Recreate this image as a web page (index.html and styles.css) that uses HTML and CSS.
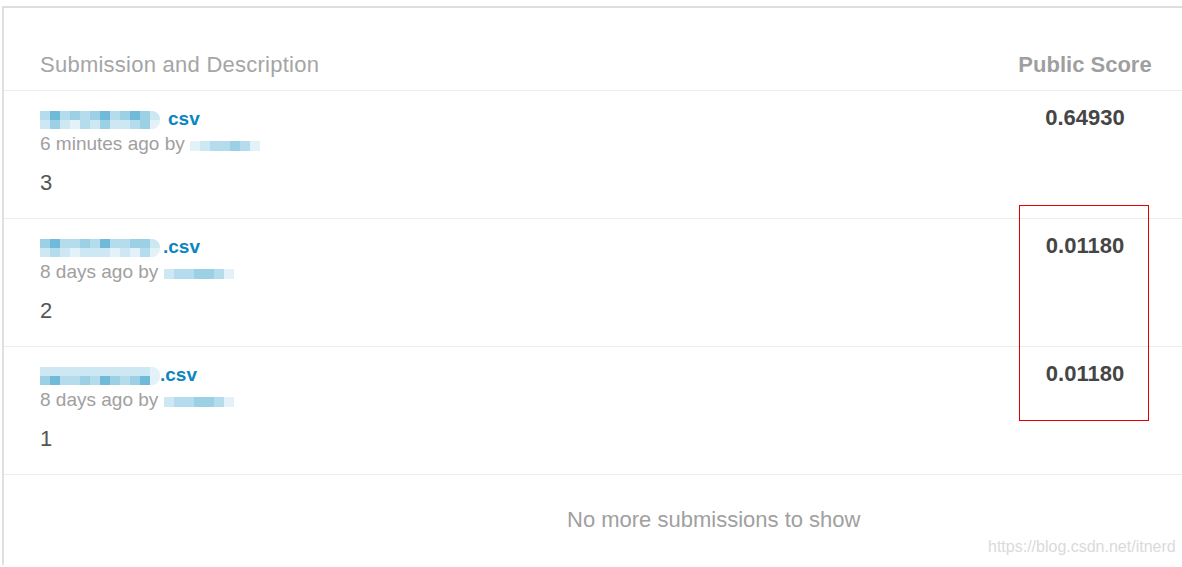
FILE: index.html
```html
<!DOCTYPE html>
<html>
<head>
<meta charset="utf-8">
<link rel="stylesheet" href="styles.css">
</head>
<body>
<div class="panel">
  <div class="head">
    <div class="col-main">Submission and Description</div>
    <div class="col-score">Public Score</div>
  </div>

  <div class="row">
    <div class="col-main">
      <div class="file"><span class="mosaic cover"><i class="m3"></i><i class="m1"></i><i class="m3"></i><i class="m2"></i><i class="m3"></i><i class="m2"></i><i class="m1"></i><i class="m3"></i><i class="m2"></i><i class="m1"></i><i class="m2"></i><i class="m4"></i><i class="m4"></i><i class="m2"></i><i class="m4"></i><i class="m5"></i><i class="m3"></i><i class="m4"></i><i class="m2"></i><i class="m4"></i><i class="m4"></i><i class="m3"></i><i class="m2"></i><i class="m5"></i></span>csv</div>
      <div class="meta">6 minutes ago by <span class="user"><i class="m5"></i><i class="m4"></i><i class="m3"></i><i class="m3"></i><i class="m2"></i><i class="m3"></i><i class="m5"></i></span></div>
      <div class="desc">3</div>
    </div>
    <div class="col-score score">0.64930</div>
  </div>

  <div class="row">
    <div class="col-main">
      <div class="file"><span class="mosaic gap"><i class="m2"></i><i class="m1"></i><i class="m3"></i><i class="m3"></i><i class="m2"></i><i class="m3"></i><i class="m1"></i><i class="m3"></i><i class="m3"></i><i class="m2"></i><i class="m2"></i><i class="m4"></i><i class="m4"></i><i class="m3"></i><i class="m4"></i><i class="m5"></i><i class="m4"></i><i class="m4"></i><i class="m4"></i><i class="m5"></i><i class="m4"></i><i class="m5"></i><i class="m3"></i><i class="m5"></i></span>.csv</div>
      <div class="meta">8 days ago by <span class="user"><i class="m4"></i><i class="m3"></i><i class="m3"></i><i class="m2"></i><i class="m2"></i><i class="m3"></i><i class="m5"></i></span></div>
      <div class="desc">2</div>
    </div>
    <div class="col-score score">0.01180</div>
  </div>

  <div class="row">
    <div class="col-main">
      <div class="file"><span class="mosaic"><i class="m4"></i><i class="m4"></i><i class="m4"></i><i class="m4"></i><i class="m4"></i><i class="m4"></i><i class="m4"></i><i class="m4"></i><i class="m4"></i><i class="m4"></i><i class="m4"></i><i class="m5"></i><i class="m2"></i><i class="m1"></i><i class="m3"></i><i class="m3"></i><i class="m2"></i><i class="m3"></i><i class="m1"></i><i class="m2"></i><i class="m3"></i><i class="m2"></i><i class="m1"></i><i class="m5"></i></span>.csv</div>
      <div class="meta">8 days ago by <span class="user"><i class="m4"></i><i class="m3"></i><i class="m3"></i><i class="m2"></i><i class="m2"></i><i class="m3"></i><i class="m5"></i></span></div>
      <div class="desc">1</div>
    </div>
    <div class="col-score score">0.01180</div>
  </div>

  <div class="foot">No more submissions to show</div>

  <div class="mark"></div>
</div>
<div class="watermark">https://blog.csdn.net/itnerd</div>
</body>
</html>
```

FILE: styles.css
```css
html, body {
  margin: 0;
  padding: 0;
  background: #fff;
  font-family: "Liberation Sans", Arial, sans-serif;
}

.panel {
  position: relative;
  margin: 6px 0 0 2px;
  border-left: 2px solid #dee1e4;
  border-top: 2px solid #dedede;
  height: 559px;
  box-sizing: border-box;
}

.head {
  display: flex;
  align-items: flex-end;
  padding: 45px 27px 13px 36px;
  border-bottom: 1px solid #ececec;
  font-size: 22px;
  line-height: 24px;
  color: #a5a5a5;
  white-space: nowrap;
}

.head .col-main {
  letter-spacing: 0.25px;
}

.col-main {
  flex: 1;
}

.col-score {
  width: 140px;
  flex: none;
  text-align: center;
  white-space: nowrap;
}

.head .col-score {
  font-weight: bold;
  color: #9f9f9f;
}

.row {
  display: flex;
  padding: 16px 27px 0 36px;
  box-sizing: border-box;
  height: 128px;
  border-bottom: 1px solid #ececec;
}

.file {
  font-size: 19px;
  line-height: 24px;
  font-weight: bold;
  color: #0c86c0;
  display: flex;
  align-items: center;
}

.mosaic {
  display: inline-grid;
  grid-template-columns: repeat(12, 10px);
  grid-auto-rows: 9px;
  width: 120px;
  margin-top: 1px;
  border-radius: 0 8px 8px 0;
  overflow: hidden;
}

.mosaic.cover {
  margin-right: 8px;
}

.mosaic.gap {
  margin-right: 3px;
}

.mosaic i, .user i {
  display: block;
}

.user {
  display: inline-grid;
  grid-template-columns: repeat(7, 10px);
  grid-auto-rows: 10px;
  vertical-align: -1px;
}

.m1 { background: #6fbad9; }
.m2 { background: #9bd0e5; }
.m3 { background: #b4dcec; }
.m4 { background: #cde8f2; }
.m5 { background: #e3f2f8; }

.meta {
  margin-top: 1px;
  font-size: 19px;
  line-height: 24px;
  color: #a0a0a0;
}

.desc {
  margin-top: 14px;
  font-size: 22px;
  line-height: 26px;
  color: #555;
}

.score {
  margin-top: -1px;
  font-size: 22px;
  line-height: 24px;
  font-weight: bold;
  color: #454545;
}

.foot {
  padding: 33px 0 0 563px;
  font-size: 22px;
  line-height: 24px;
  color: #a0a0a0;
}

.mark {
  position: absolute;
  left: 1015px;
  top: 197px;
  width: 128px;
  height: 214px;
  border: 1px solid #e60000;
}

.watermark {
  position: absolute;
  left: 988px;
  top: 537px;
  font-size: 16px;
  line-height: 20px;
  color: #dadada;
}
```
